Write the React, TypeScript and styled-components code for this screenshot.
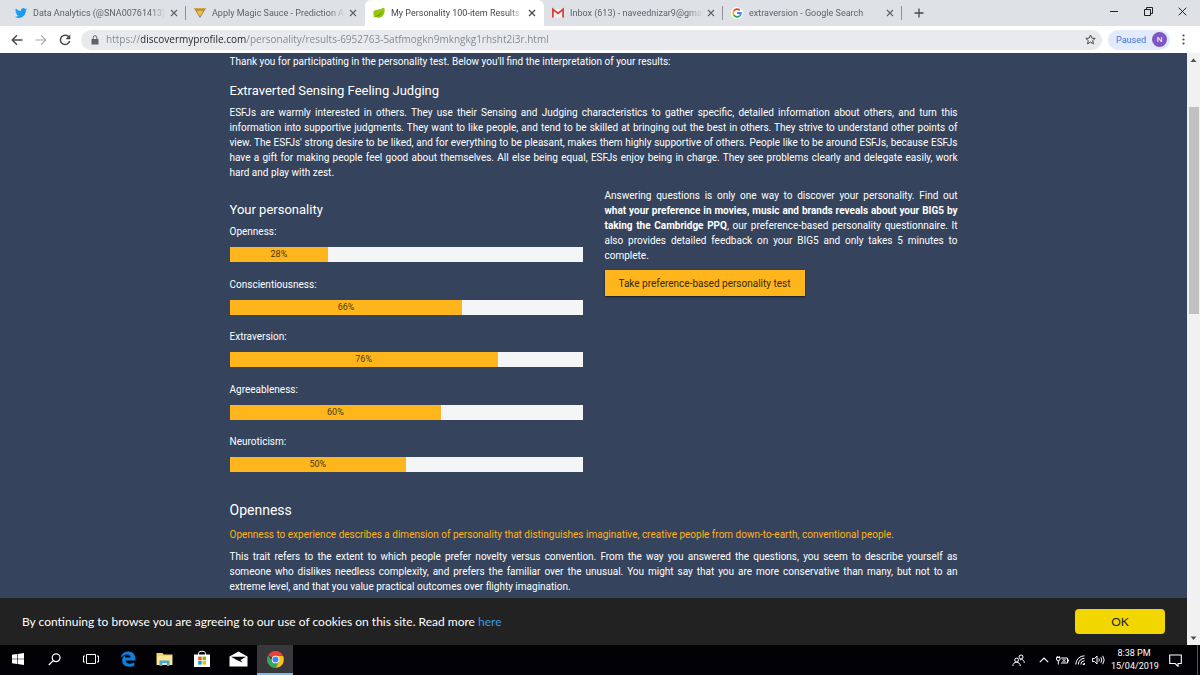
import React from "react";
import styled, { createGlobalStyle } from "styled-components";

const Global = createGlobalStyle`
  * { box-sizing: border-box; }
  body { margin: 0; }
  button { font: inherit; border: 0; padding: 0; background: none; color: inherit; cursor: pointer; }
  h2, p { margin: 0; }
  svg { display: block; flex: none; }
`;

const Desktop = styled.div`
  height: 100vh;
  display: flex;
  flex-direction: column;
  overflow: hidden;
  font-family: Roboto, "Noto Sans", sans-serif;
`;

/* Browser frame */
const TabStrip = styled.header`
  display: flex;
  flex: none;
  height: 26px;
  padding-left: 7px;
  background: #dee1e6;
  color: #45494d;
`;
const Tab = styled.div<{ $active?: boolean; $divider?: boolean }>`
  flex: 0 1 179px;
  min-width: 0;
  display: flex;
  align-items: center;
  padding: 0 6px 0 8px;
  font-size: 9px;
  border-radius: 6px 6px 0 0;
  background: ${(p) => (p.$active ? "#fff" : "transparent")};
  color: ${(p) => (p.$active ? "#45494d" : "#5f6368")};
  position: relative;
  &::after {
    content: "";
    display: ${(p) => (p.$divider ? "block" : "none")};
    position: absolute;
    right: 0;
    top: 6px;
    height: 14px;
    width: 1px;
    background: #8d9196;
  }
`;
const TabTitle = styled.span`
  flex: 1;
  margin: 0 2px 0 6px;
  overflow: hidden;
  white-space: nowrap;
  mask-image: linear-gradient(to right, #000 88%, transparent);
`;
const IconButton = styled.button<{ $w?: number }>`
  display: flex;
  align-items: center;
  justify-content: center;
  width: ${(p) => p.$w ?? 12}px;
  height: 100%;
`;
const WindowControls = styled.div`
  display: flex;
  margin-left: auto;
  height: 22px;
  color: #202124;
`;
const Toolbar = styled.div`
  display: flex;
  align-items: center;
  flex: none;
  height: 27px;
  padding: 0 4px;
  background: #fff;
  color: #45494d;
`;
const AddressBar = styled.div`
  flex: 1;
  display: flex;
  align-items: center;
  height: 20px;
  margin-left: 4px;
  padding: 0 4px 0 10px;
  border-radius: 10px;
  background: #e8eaed;
`;
/* The gradient tints the host name darker than the scheme and the path. */
const Address = styled.input`
  flex: 1;
  margin-left: 7px;
  height: 18px;
  margin-bottom: 2px;
  border: 0;
  padding: 0;
  outline: 0;
  font: 10px "Open Sans", "Noto Sans", sans-serif;
  color: transparent;
  background: linear-gradient(to right, #80868b 35px, #202124 35px, #202124 140px, #80868b 140px);
  background-clip: text;
  -webkit-background-clip: text;
`;
const Profile = styled.button`
  display: flex;
  align-items: center;
  gap: 6px;
  height: 20px;
  margin-left: 6px;
  padding: 0 3px 0 8px;
  border-radius: 10px;
  background: #e1ebfc;
  color: #4374d9;
  font-size: 9px;
`;
const Avatar = styled.span`
  width: 15px;
  height: 15px;
  border-radius: 50%;
  background: #7e57c2;
  color: #fff;
  font-size: 8px;
  line-height: 15px;
  text-align: center;
`;

/* Page */
const Viewport = styled.div`
  flex: 1;
  min-height: 0;
  display: flex;
`;
const Page = styled.div`
  flex: 1;
  min-width: 0;
  display: flex;
  flex-direction: column;
  background: #35445c;
`;
const Main = styled.main`
  flex: 1;
  min-height: 0;
  overflow: hidden;
  font-size: 10px;
  line-height: 15px;
  color: #fff;
`;
const Content = styled.div`
  max-width: 728px;
  margin: 0 auto;
  padding-top: 1px;
`;
const Title = styled.h2<{ $large?: boolean }>`
  font-size: ${(p) => (p.$large ? 14 : 13)}px;
  line-height: 20px;
  font-weight: 400;
`;
const Para = styled.p`
  text-align: justify;
`;
const Lead = styled.p`
  color: #ffb319;
`;
const Columns = styled.div`
  display: grid;
  grid-template-columns: 1fr 1fr;
  gap: 22px;
`;
const Stack = styled.section<{ $top: number; $gap?: number }>`
  display: flex;
  flex-direction: column;
  padding-top: ${(p) => p.$top}px;
  gap: ${(p) => p.$gap ?? 4}px;
`;
const Traits = styled.div`
  display: flex;
  flex-direction: column;
  justify-content: space-between;
  min-height: 248px;
`;
const Trait = styled.div`
  display: flex;
  flex-direction: column;
  gap: 8px;
`;
const Track = styled.div`
  height: 15px;
  background: #f4f5f6;
`;
const Fill = styled.div`
  height: 15px;
  background: #ffb61c;
  color: #4a3a12;
  font-size: 9px;
  line-height: 15px;
  text-align: center;
`;
const TestButton = styled.button`
  align-self: flex-start;
  height: 26px;
  margin-top: 3px;
  padding: 0 14px;
  background: #ffb61c;
  color: #33290f;
  box-shadow: 0 1px 2px rgba(0, 0, 0, 0.6);
`;
const CookieBar = styled.aside`
  display: flex;
  align-items: center;
  justify-content: space-between;
  flex: none;
  height: 47px;
  padding: 0 22px;
  background: #222;
  color: #fff;
  font-family: Lato, sans-serif;
  font-size: 12px;
  a { color: #3f9be0; text-decoration: none; }
`;
const OkButton = styled.button`
  width: 90px;
  height: 25px;
  border-radius: 4px;
  background: #f1d600;
  color: #222;
`;
const Scrollbar = styled.div`
  flex: none;
  width: 13px;
  display: flex;
  flex-direction: column;
  align-items: center;
  background: #f1f1f1;
  color: #505050;
`;
const ScrollSpace = styled.div<{ $grow: number }>`
  flex: ${(p) => p.$grow} 1 0;
`;
const Thumb = styled.div`
  flex: 207 1 0;
  width: 10px;
  background: #c1c1c1;
`;

/* Taskbar */
const Taskbar = styled.footer`
  display: flex;
  flex: none;
  height: 30px;
  background: #020206;
  color: #fff;
`;
const Task = styled.button<{ $w: number; $active?: boolean }>`
  width: ${(p) => p.$w}px;
  display: flex;
  align-items: center;
  justify-content: center;
  background: ${(p) => (p.$active ? "#38383c" : "transparent")};
  border-bottom: 2px solid ${(p) => (p.$active ? "#76b9ed" : "transparent")};
`;
const Tray = styled.div`
  display: flex;
  align-items: center;
  margin-left: auto;
`;
const Clock = styled.time`
  width: 46px;
  margin-left: 4px;
  font-size: 9px;
  line-height: 13px;
  text-align: center;
  white-space: nowrap;
`;
const ShowDesktop = styled.button`
  width: 3px;
  height: 30px;
  margin-left: 4px;
  border-left: 1px solid #55555a;
`;

const Stroke = ({ d, w = 12, h = w, sw = 1, color = "currentColor" }: { d: string; w?: number; h?: number; sw?: number; color?: string }) => (
  <svg width={w} height={h} viewBox={`0 0 ${w} ${h}`} fill="none" stroke={color} strokeWidth={sw} aria-hidden="true">
    <path d={d} />
  </svg>
);
const Close = () => (
  <IconButton aria-label="Close tab"><Stroke w={8} sw={1.2} d="M1 1l6 6M7 1l-6 6" /></IconButton>
);
const Twitter = () => (
  <svg width="12" height="12" viewBox="0 0 24 24" fill="#1d9bf0">
    <path d="M24 4.6a10 10 0 0 1-2.8.8 5 5 0 0 0 2.1-2.7 10 10 0 0 1-3.1 1.2 4.9 4.9 0 0 0-8.4 4.5A14 14 0 0 1 1.7 3.2a4.9 4.9 0 0 0 1.5 6.5A5 5 0 0 1 1 9.1a4.9 4.9 0 0 0 3.9 4.9 5 5 0 0 1-2.2.1 4.9 4.9 0 0 0 4.6 3.4A10 10 0 0 1 0 19.5 14 14 0 0 0 21.5 7.1 10 10 0 0 0 24 4.6z" />
  </svg>
);
const Sauce = () => (
  <svg width="12" height="12" viewBox="0 0 12 12">
    <path d="M0 1h12L6 11z" fill="#77756e" />
    <path d="M0 1h12l-.8 1.600H.8z" fill="#d9a441" />
    <path d="M2.300 3.400h7.400L6 9.600z" fill="#ffc021" />
  </svg>
);
const Leaf = () => (
  <svg width="12" height="12" viewBox="0 0 12 12">
    <path d="M.3 5.500C.5 2.500 5 3 7.500 2 9.500 1.300 10.500.5 11.300.5c.8 3.500.5 8-3.300 9.700-2.500 1-4.500.3-5.500-.5L.6 11l.4-2C.4 8 .2 7 .3 5.500z" fill="#93c90e" />
    <path d="M1.500 9c3-.2 6-2 8.500-5.500C8.500 8 5.500 9.800 2.500 9.700z" fill="#6da30a" />
  </svg>
);
const Gmail = () => (
  <svg width="12" height="12" viewBox="0 0 12 12">
    <path d="M.5 2h11v8.500H.5z" fill="#f1f1f1" />
    <path d="M.9 10.500V2.300L6 6.500l5.100-4.200v8.200" fill="none" stroke="#d93a30" strokeWidth="1.700" />
  </svg>
);
const Google = () => (
  <svg width="12" height="12" viewBox="0 0 12 12">
    <circle cx="6" cy="6" r="6" fill="#fff" />
    <g fill="none" strokeWidth="1.800">
      <path d="M2.700 4A3.900 3.900 0 0 1 8.800 3.300" stroke="#ea4335" />
      <path d="M2.700 8A3.900 3.900 0 0 1 2.700 4" stroke="#fbbc05" />
      <path d="M8.700 8.800A3.900 3.900 0 0 1 2.700 8" stroke="#34a853" />
      <path d="M6 6h3.900A3.900 3.900 0 0 1 8.700 8.800" stroke="#4285f4" />
    </g>
  </svg>
);
const Edge = () => (
  <svg width="16" height="16" viewBox="0 0 16 16">
    <path d="M.6 7.100C1.300 3 4.300.5 8.200.5c4.600 0 7.300 3.200 7.300 7.400v1.600H5.600c.2 2.200 2 3.200 4.300 3.200 1.600 0 3.100-.5 4.400-1.200v3.200c-1.400.7-3 1.100-5 1.100-4.400 0-7.200-2.500-7.200-6.200 0-2.400 1.300-4.400 3.300-5.500-.3.700-.5 1.300-.5 2.300h5.600c0-1.900-1-3-3.100-3C4.700 3.400 2.200 5 .6 7.100z" fill="#0f7fdc" />
  </svg>
);
const Folder = () => (
  <svg width="17" height="15" viewBox="0 0 17 15">
    <path d="M.5 1h6l1.200 1.500h8.800V13H.5z" fill="#f5d36b" />
    <path d="M1 4h15v9H1z" fill="#fbe596" />
    <path d="M3.500 14V8.500h10V14h-2.700v-3H6.200v3z" fill="#4ba6d8" />
  </svg>
);
const Store = () => (
  <svg width="18" height="18" viewBox="0 0 18 18">
    <path d="M5.500 5V3.200Q5.500 1.200 9 1.200t3.500 2V5" fill="none" stroke="#fff" />
    <path d="M1 4.500h16V17H1z" fill="#fff" />
    <path d="M5.200 6.600h3.500V10.200H5.200z" fill="#f25022" /><path d="M9.500 6.600H13V10.200H9.500z" fill="#7fba00" />
    <path d="M5.200 11h3.500V14.600H5.200z" fill="#00a4ef" /><path d="M9.500 11H13V14.600H9.500z" fill="#ffb900" />
  </svg>
);
const Mail = () => (
  <svg width="19" height="16" viewBox="0 0 19 16">
    <path d="M.5 5.500L9.500.5l9 5V15.500H.5z" fill="#fff" />
    <path d="M2 5.700h15L11.500 9l2 2.400L7.300 8.700z" fill="#020206" />
  </svg>
);
const Chrome = () => (
  <svg width="17" height="17" viewBox="0 0 18 18">
    <path d="M9 9L1.200 4.500A9 9 0 0 1 16.800 4.500L9 5z" fill="#ea4335" />
    <path d="M9 5h7.900A9 9 0 0 1 9 18l3.500-7z" fill="#fbc116" />
    <path d="M1.200 4.500l4.300 6.500L9 13l-1 5A9 9 0 0 1 1.200 4.500zM12.500 11L9 18H8l1-5z" fill="#34a853" />
    <circle cx="9" cy="9" r="4.100" fill="#fff" />
    <circle cx="9" cy="9" r="3.200" fill="#4285f4" />
  </svg>
);

const tabs = [
  { title: "Data Analytics (@SNA00761413)", icon: <Twitter />, divider: true },
  { title: "Apply Magic Sauce - Prediction API", icon: <Sauce /> },
  { title: "My Personality 100-item Results", icon: <Leaf />, active: true },
  { title: "Inbox (613) - naveednizar9@gmail.com", icon: <Gmail />, divider: true },
  { title: "extraversion - Google Search", icon: <Google />, divider: true },
];
const traits: [string, number][] = [
  ["Openness", 28], ["Conscientiousness", 66], ["Extraversion", 76], ["Agreeableness", 60], ["Neuroticism", 50],
];

export default function App() {
  return (
    <Desktop>
      <Global />
      <TabStrip>
        {tabs.map((t) => (
          <Tab key={t.title} $active={t.active} $divider={t.divider}>
            {t.icon}
            <TabTitle>{t.title}</TabTitle>
            <Close />
          </Tab>
        ))}
        <IconButton $w={34} aria-label="New tab"><Stroke w={10} sw={1.3} d="M5 .5v9M.5 5h9" /></IconButton>
        <WindowControls>
          <IconButton $w={34} aria-label="Minimize"><Stroke w={8} d="M0 4.500h8" /></IconButton>
          <IconButton $w={34} aria-label="Restore"><Stroke w={9} d="M.5 2.500h6v6h-6zM2.500 2.500v-2h6v6h-2" /></IconButton>
          <IconButton $w={35} aria-label="Close window"><Stroke w={9} d="M.7.7l7.600 7.600M8.300.7L.7 8.300" /></IconButton>
        </WindowControls>
      </TabStrip>
      <Toolbar>
        <IconButton $w={25} aria-label="Back"><Stroke w={12} sw={1.4} d="M11.500 6H1.500M6 1.200L1.200 6 6 10.800" /></IconButton>
        <IconButton $w={24} aria-label="Forward"><Stroke w={12} sw={1.2} color="#a9acb0" d="M.5 6h10M6 1.200L10.800 6 6 10.800" /></IconButton>
        <IconButton $w={24} aria-label="Reload">
          <svg width="12" height="12" viewBox="0 0 12 12" fill="none" stroke="currentColor" strokeWidth="1.500">
            <path d="M10.200 3.500A4.700 4.700 0 1 0 10.700 7" /><path d="M11.300.5v4.800H6.500z" fill="currentColor" stroke="none" />
          </svg>
        </IconButton>
        <AddressBar>
          <svg width="8" height="10" viewBox="0 0 8 10"><path d="M.5 4h7v5.500h-7z" fill="#5f6368" /><path d="M2.200 4V2.500a1.800 1.800 0 0 1 3.600 0V4" fill="none" stroke="#5f6368" /></svg>
          <Address aria-label="Address" defaultValue="https://discovermyprofile.com/personality/results-6952763-5atfmogkn9mkngkg1rhsht2i3r.html" />
          <IconButton $w={16} aria-label="Bookmark">
            <Stroke w={11} h={11} d="M5.500 1l1.400 3.100 3.300.3-2.500 2.200.8 3.300-3-1.800-3 1.800.8-3.300L.8 4.400l3.300-.3z" />
          </IconButton>
        </AddressBar>
        <Profile>Paused<Avatar>N</Avatar></Profile>
        <IconButton $w={26} aria-label="Menu">
          <svg width="3" height="11" viewBox="0 0 3 11" fill="currentColor"><circle cx="1.500" cy="1.500" r="1.100" /><circle cx="1.500" cy="5.500" r="1.100" /><circle cx="1.500" cy="9.500" r="1.100" /></svg>
        </IconButton>
      </Toolbar>
      <Viewport>
        <Page>
          <Main>
            <Content>
              <p>Thank you for participating in the personality test. Below you'll find the interpretation of your results:</p>
              <Stack $top={12}>
                <Title>Extraverted Sensing Feeling Judging</Title>
                <Para>
                  ESFJs are warmly interested in others. They use their Sensing and Judging characteristics to gather specific, detailed information about others, and turn this information into supportive judgments. They want to like people, and tend to be skilled at bringing out the best in others. They strive to understand other points of view. The ESFJs' strong desire to be liked, and for everything to be pleasant, makes them highly supportive of others. People like to be around ESFJs, because ESFJs have a gift for making people feel good about themselves. All else being equal, ESFJs enjoy being in charge. They see problems clearly and delegate easily, work hard and play with zest.
                </Para>
              </Stack>
              <Columns>
                <Stack $top={20}>
                  <Title>Your personality</Title>
                  <Traits>
                    {traits.map(([name, value]) => (
                      <Trait key={name}>
                        <span>{name}:</span>
                        <Track><Fill style={{ width: `${value}%` }}>{value}%</Fill></Track>
                      </Trait>
                    ))}
                  </Traits>
                </Stack>
                <Stack $top={8}>
                  <Para>
                    Answering questions is only one way to discover your personality. Find out <strong>what&nbsp;your preference in movies, music and brands reveals about your BIG5 by taking the Cambridge PPQ</strong>, our preference-based personality questionnaire. It also provides detailed feedback on your BIG5 and only takes 5 minutes to complete.
                  </Para>
                  <TestButton>Take preference-based personality test</TestButton>
                </Stack>
              </Columns>
              <Stack $top={28} $gap={7}>
                <Title $large>Openness</Title>
                <Lead>Openness to experience describes a dimension of personality that distinguishes imaginative, creative people from down-to-earth, conventional people.</Lead>
                <Para>
                  This trait refers to the extent to which people prefer novelty versus convention. From the way you answered the questions, you seem to describe yourself as someone who dislikes needless complexity, and prefers the familiar over the unusual. You might say that you are more conservative than many, but not to an extreme level, and that you value practical outcomes over flighty imagination.
                </Para>
              </Stack>
            </Content>
          </Main>
          <CookieBar>
            <span>By continuing to browse you are agreeing to our use of cookies on this site. Read more <a href="#cookies">here</a></span>
            <OkButton>OK</OkButton>
          </CookieBar>
        </Page>
        <Scrollbar>
          <ScrollSpace $grow={54}>
            <svg width="7" height="14" viewBox="0 0 7 14"><path d="M.5 9L3.500 5.500 6.500 9z" fill="currentColor" /></svg>
          </ScrollSpace>
          <Thumb />
          <ScrollSpace $grow={317} />
          <svg width="7" height="14" viewBox="0 0 7 14"><path d="M.5 5.500L3.500 9 6.500 5.500z" fill="currentColor" /></svg>
        </Scrollbar>
      </Viewport>
      <Taskbar>
        <Task $w={36} aria-label="Start">
          <svg width="12" height="12" viewBox="0 0 12 12" fill="#fff"><path d="M0 1.700l5-.7v4.700H0zM5.600.9L12 0v5.700H5.600zM0 6.300h5V11l-5-.7zM5.600 6.300H12V12l-6.400-.9z" /></svg>
        </Task>
        <Task $w={36} aria-label="Search"><Stroke w={13} sw={1.2} d="M12 4.700a3.900 3.900 0 1 1-7.800 0 3.900 3.900 0 0 1 7.800 0zM5.300 7.500L.8 12" /></Task>
        <Task $w={37} aria-label="Task view"><Stroke w={16} h={12} d="M3.500 1.500h9v9h-9zM2 3H.5v6H2M14 3h1.500v6H14" /></Task>
        <Task $w={37} aria-label="Edge"><Edge /></Task>
        <Task $w={37} aria-label="File Explorer"><Folder /></Task>
        <Task $w={37} aria-label="Store"><Store /></Task>
        <Task $w={37} aria-label="Mail"><Mail /></Task>
        <Task $w={36} $active aria-label="Chrome"><Chrome /></Task>
        <Tray>
          <IconButton $w={34} aria-label="People"><Stroke w={13} d="M6.500 6a1.900 1.900 0 1 1-3.800 0 1.900 1.900 0 0 1 3.800 0zM.8 12c0-5 7.500-5 7.500 0M11 3a2 2 0 1 1-4 0 2 2 0 0 1 4 0zM8 6c2-1.200 4.300 0 4.300 2.800" /></IconButton>
          <IconButton $w={18} aria-label="Hidden icons"><Stroke w={10} h={6} sw={1.1} d="M.8 5.200L5 1l4.200 4.200" /></IconButton>
          <IconButton $w={18} aria-label="Battery"><Stroke w={13} h={9} d="M5 2h6.500v5H5M12.500 3.500v2M.5 1.500h3.500v1.500a1.700 1.700 0 0 1-3.500 0zM1.300 0v1.500M3.200 0v1.500M2.300 5V8.500M6.500 3l3 3M9.500 3L6.500 6" /></IconButton>
          <IconButton $w={18} aria-label="Wi-Fi"><Stroke w={10} d="M.8 9.500A8.700 8.700 0 0 1 9.500.8M3.300 9.500a6.200 6.200 0 0 1 6.200-6.200M5.800 9.500a3.700 3.700 0 0 1 3.700-3.700M8 9.500L9.500 8v1.500z" /></IconButton>
          <IconButton $w={18} aria-label="Volume"><Stroke w={13} h={10} d="M.5 3.500H2.500L5 1v8L2.500 6.500h-2zM6.800 3.500q1 1.500 0 3M8.800 2.200q2 2.800 0 5.600M10.700.8q3 4.200 0 8.400" /></IconButton>
          <Clock>8:38 PM<br />15/04/2019</Clock>
          <IconButton $w={36} aria-label="Notifications"><Stroke w={13} h={13} sw={1.1} d="M.7 1h11.600v8.500H9v2.800L6.200 9.500H.7z" /></IconButton>
          <ShowDesktop aria-label="Show desktop" />
        </Tray>
      </Taskbar>
    </Desktop>
  );
}
